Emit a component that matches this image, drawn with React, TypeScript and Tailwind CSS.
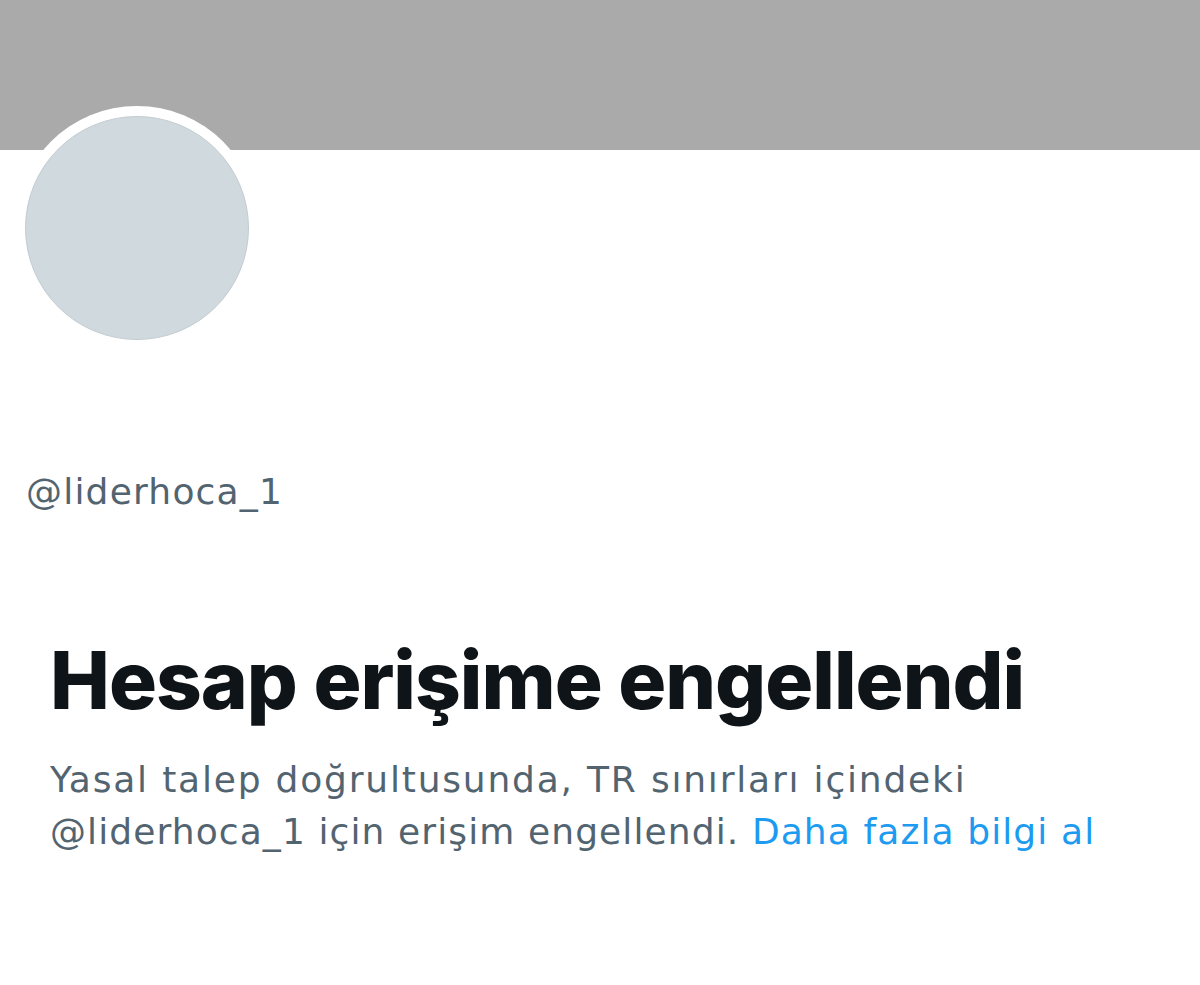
export default function App() {
  return (
    <div className="w-[1200px] h-[985px] bg-white overflow-hidden relative" style={{ fontFamily: "Inter, 'Noto Sans', sans-serif" }}>
      <div className="h-[150px] bg-[#aaaaaa]" />
      <div className="absolute left-[15px] top-[106px] w-[244px] h-[244px] rounded-full bg-white flex items-center justify-center">
        <div className="w-[224px] h-[224px] rounded-full bg-[#cfd9de] border border-[#c3ccd1]" />
      </div>
      <div className="pt-[320px] pl-[26px] text-[36px] leading-[44px] tracking-[1.2px] text-[#536471]" style={{ fontFamily: "'DejaVu Sans', sans-serif" }}>@liderhoca_1</div>
      <div className="pl-[50px] pt-[118px]">
        <h1 className="text-[80px] leading-[96px] font-extrabold text-[#0f1419] tracking-[-1px]">Hesap erişime engellendi</h1>
        <p className="mt-[26px] text-[36px] leading-[52px] text-[#536471] w-[1130px]" style={{ fontFamily: "'DejaVu Sans', sans-serif" }}>
          <span className="tracking-[1.8px]">Yasal talep doğrultusunda, TR sınırları içindeki</span><br />
          <span className="tracking-[1.1px]">@liderhoca_1 için erişim engellendi. <span className="text-[#1d9bf0]">Daha fazla bilgi al</span></span>
        </p>
      </div>
    </div>
  );
}
